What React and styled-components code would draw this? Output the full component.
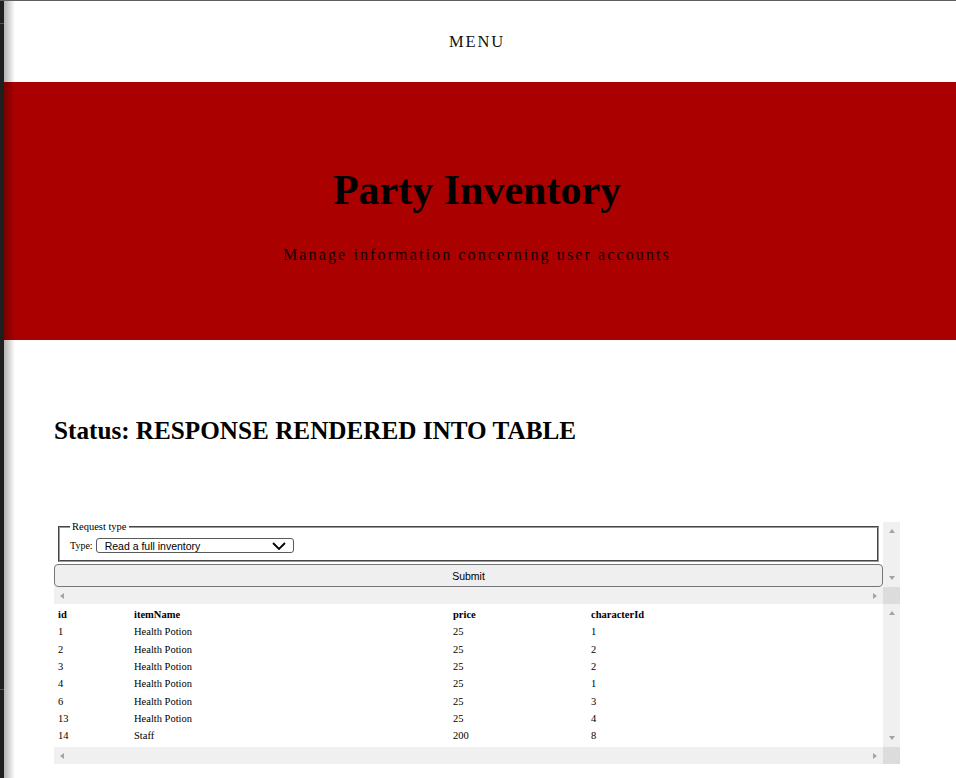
import React from 'react';
import styled, { createGlobalStyle } from 'styled-components';

const Global = createGlobalStyle`
  html, body { margin: 0; padding: 0; background: #fff; }
  body { font-family: "Liberation Serif", "Times New Roman", serif; overflow: hidden; }
  * { box-sizing: border-box; }
`;

const Shell = styled.div`
  display: flex;
  width: 956px;
  height: 778px;
  border-top: 1px solid #5e5e5e;
  overflow: hidden;
`;

const LeftEdge = styled.div`
  flex: 0 0 4px;
  background:
    linear-gradient(#505050, #505050) 0 22px / 100% 1px no-repeat,
    linear-gradient(#505050, #505050) 0 688px / 100% 1px no-repeat,
    #1f1f1f;
`;

const Page = styled.div`
  position: relative;
  flex: 1;
  display: flex;
  flex-direction: column;
  &::before {
    content: '';
    position: absolute;
    left: 0;
    top: 0;
    bottom: 0;
    width: 11px;
    background: linear-gradient(to right, rgba(0, 0, 0, 0.3), rgba(0, 0, 0, 0));
    pointer-events: none;
    z-index: 2;
  }
`;

const Nav = styled.nav`
  height: 81px;
  display: flex;
  align-items: center;
  justify-content: center;
  padding-right: 6px;
  font-size: 16.5px;
  letter-spacing: 1.8px;
  color: #111;
`;

const Hero = styled.header`
  height: 258px;
  background: #aa0000;
  padding: 84px 6px 0 0;
  text-align: center;
`;

const Title = styled.h1`
  margin: 0;
  font-size: 42px;
  line-height: 48px;
  font-weight: bold;
  color: #000;
`;

const Subtitle = styled.p`
  margin: 31px 0 0;
  font-size: 16px;
  line-height: 20px;
  letter-spacing: 2.12px;
  color: #140000;
`;

const Main = styled.main`
  padding: 76px 56px 0 50px;
`;

const Status = styled.h2`
  margin: 0 0 76px;
  font-size: 25.2px;
  line-height: 30px;
  font-weight: bold;
  color: #000;
`;

const Frame = styled.div`
  display: grid;
  grid-template-columns: 1fr 17px;
  grid-template-rows: 1fr 17px;
  height: ${p => p.$h}px;
`;

const FrameBody = styled.div`
  overflow: hidden;
  background: #fff;
`;

const VScroll = styled.div`
  background: #f0f0f0;
  display: flex;
  flex-direction: column;
  justify-content: space-between;
  align-items: center;
  padding: 7px 0;
`;

const HScroll = styled.div`
  background: #f0f0f0;
  display: flex;
  justify-content: space-between;
  align-items: center;
  padding: 0 6px;
`;

const Corner = styled.div`
  background: #dcdcdc;
`;

const Tri = styled.span`
  width: 0;
  height: 0;
  border-style: solid;
  border-color: transparent;
  ${p =>
    p.$dir === 'up'
      ? 'border-width: 0 3.5px 4px; border-bottom-color: #a3a3a3;'
      : p.$dir === 'down'
      ? 'border-width: 4px 3.5px 0; border-top-color: #a3a3a3;'
      : p.$dir === 'left'
      ? 'border-width: 3.5px 4px 3.5px 0; border-right-color: #a3a3a3;'
      : 'border-width: 3.5px 0 3.5px 4px; border-left-color: #a3a3a3;'}
`;

const Fieldset = styled.fieldset`
  margin: 0 4px;
  padding: 0 10px 7px;
  border: 2px groove #9a9a9a;
  min-inline-size: 0;
`;

const Legend = styled.legend`
  font-size: 10.5px;
  line-height: 10px;
  padding: 0 2px;
  color: #000;
`;

const FieldRow = styled.div`
  display: flex;
  align-items: center;
  gap: 3px;
  margin-top: 6px;
`;

const Label = styled.span`
  font-size: 10px;
  color: #000;
`;

const SelectBox = styled.div`
  width: 198px;
  height: 15px;
  border: 1px solid #5a5a5a;
  border-radius: 3px;
  display: flex;
  align-items: center;
  justify-content: space-between;
  padding: 0 7px 0 8px;
  font-family: "Liberation Sans", Arial, sans-serif;
  font-size: 10.5px;
  color: #000;
  background: #fff;
`;

const SubmitButton = styled.button`
  display: block;
  width: 100%;
  height: 23px;
  margin-top: 2px;
  border: 1px solid #767676;
  border-radius: 4px;
  background: #efefef;
  font-family: "Liberation Sans", Arial, sans-serif;
  font-size: 10.5px;
  color: #000;
  padding: 0;
`;

const Table = styled.table`
  border-collapse: collapse;
  width: calc(100% - 4px);
  margin: 2px 0 0 4px;
  font-size: 10.5px;
  color: #000;
  table-layout: fixed;
`;

const Cell = styled.td`
  padding: 0;
  height: 17.33px;
  text-align: left;
  vertical-align: middle;
  white-space: nowrap;
  font-weight: ${p => (p.$head ? 'bold' : 'normal')};
`;

const rows = [
  [1, 'Health Potion', 25, 1],
  [2, 'Health Potion', 25, 2],
  [3, 'Health Potion', 25, 2],
  [4, 'Health Potion', 25, 1],
  [6, 'Health Potion', 25, 3],
  [13, 'Health Potion', 25, 4],
  [14, 'Staff', 200, 8],
];

const ScrollFrame = ({ h, children }) => (
  <Frame $h={h}>
    <FrameBody>{children}</FrameBody>
    <VScroll>
      <Tri $dir="up" />
      <Tri $dir="down" />
    </VScroll>
    <HScroll>
      <Tri $dir="left" />
      <Tri $dir="right" />
    </HScroll>
    <Corner />
  </Frame>
);

export default function App() {
  return (
    <>
      <Global />
      <Shell>
        <LeftEdge />
        <Page>
          <Nav>MENU</Nav>
          <Hero>
            <Title>Party Inventory</Title>
            <Subtitle>Manage information concerning user accounts</Subtitle>
          </Hero>
          <Main>
            <Status>Status: RESPONSE RENDERED INTO TABLE</Status>
            <ScrollFrame h={82}>
              <Fieldset>
                <Legend>Request type</Legend>
                <FieldRow>
                  <Label>Type:</Label>
                  <SelectBox>
                    <span>Read a full inventory</span>
                    <svg width="14" height="8" viewBox="0 0 14 8">
                      <polyline points="1,1 7,7 13,1" fill="none" stroke="#000" strokeWidth="1.8" />
                    </svg>
                  </SelectBox>
                </FieldRow>
              </Fieldset>
              <SubmitButton>Submit</SubmitButton>
            </ScrollFrame>
            <ScrollFrame h={160}>
              <Table>
                <colgroup>
                  <col style={{ width: 76 }} />
                  <col style={{ width: 319 }} />
                  <col style={{ width: 138 }} />
                  <col />
                </colgroup>
                <thead>
                  <tr>
                    <Cell as="th" $head>id</Cell>
                    <Cell as="th" $head>itemName</Cell>
                    <Cell as="th" $head>price</Cell>
                    <Cell as="th" $head>characterId</Cell>
                  </tr>
                </thead>
                <tbody>
                  {rows.map(r => (
                    <tr key={r[0]}>
                      {r.map((v, i) => (
                        <Cell key={i}>{v}</Cell>
                      ))}
                    </tr>
                  ))}
                </tbody>
              </Table>
            </ScrollFrame>
          </Main>
        </Page>
      </Shell>
    </>
  );
}
